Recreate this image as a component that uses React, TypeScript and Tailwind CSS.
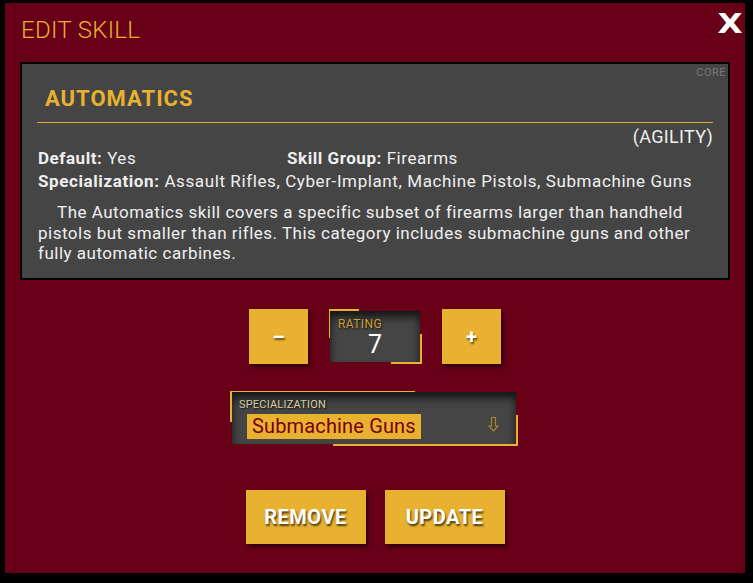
import React from "react";

// Edit skill modal — dark red panel over a black page

const SpinButton: React.FC<{ label: string }> = ({ label }) => (
  <button className="w-[59px] h-[55px] bg-[#e8b230] shadow-[2px_3px_4px_rgba(0,0,0,0.55)] flex items-center justify-center text-white font-bold text-[20px] [text-shadow:1px_2px_2px_rgba(0,0,0,0.6)]">
    {label}
  </button>
);

const ActionButton: React.FC<{ label: string }> = ({ label }) => (
  <button className="w-[120px] h-[54px] bg-[#e8b230] shadow-[2px_3px_4px_rgba(0,0,0,0.55)] flex items-center justify-center text-white font-bold text-[20px] tracking-[0.5px] [text-shadow:1px_2px_2px_rgba(0,0,0,0.7)]">
    {label}
  </button>
);

// outlined down arrow used by the select
const DownArrow = () => (
  <svg width="11" height="15" viewBox="0 0 11 15" fill="none" stroke="#a8842c" strokeWidth="1.2">
    <path d="M3.5 0.5 H7.5 V9 H10 L5.5 14 L1 9 H3.5 Z" />
  </svg>
);

export default function App() {
  return (
    <div className="w-[753px] h-[583px] bg-black pl-[5px] pt-[3px] font-['Roboto',sans-serif] overflow-hidden">
      <div className="relative w-[740px] h-[570px] bg-[#680018] flex flex-col">
        {/* header */}
        <div className="flex items-start justify-between pl-[16px] pr-[5px] pt-[13px] h-[59px]">
          <h2 className="text-[24px] leading-[28px] text-[#e8b230] font-light tracking-[0.3px]">EDIT SKILL</h2>
          <button className="inline-block scale-x-[1.25] text-white font-bold text-[26px] leading-[26px] mt-[-5px] font-['DejaVu_Sans',sans-serif]">X</button>
        </div>

        {/* skill card */}
        <div className="ml-[15px] w-[710px] h-[218px] border-2 border-black bg-[#454545] px-[15px] pt-[22px] text-[#efefef]">
          <div className="relative">
            <span className="absolute right-[-13px] top-[-21px] text-[11px] text-[#7a7a7a] tracking-[0.5px]">CORE</span>
            <h3 className="pl-[8px] text-[22px] leading-[26px] font-bold text-[#e8b230] tracking-[1px]">AUTOMATICS</h3>
          </div>
          <div className="mt-[10px] border-t border-[#d9a93a]" />
          <div className="text-right text-[18px] leading-[20px] mt-[4px] tracking-[0.3px]">(AGILITY)</div>
          <div className="flex text-[17px] leading-[23px] pl-[1px] tracking-[0.55px]">
            <div className="w-[249px]"><span className="font-bold">Default:</span> Yes</div>
            <div><span className="font-bold">Skill Group:</span> Firearms</div>
          </div>
          <div className="text-[17px] leading-[23px] pl-[1px] tracking-[0.6px]">
            <span className="font-bold">Specialization:</span> Assault Rifles, Cyber-Implant, Machine Pistols, Submachine Guns
          </div>
          <p className="mt-[9px] text-[17px] leading-[20.5px] pl-[1px] indent-[19px] tracking-[0.5px]">
            The Automatics skill covers a specific subset of firearms larger than handheld
            <br />
            pistols but smaller than rifles. This category includes submachine guns and other
            <br />
            fully automatic carbines.
          </p>
        </div>

        {/* rating */}
        <div className="mt-[29px] flex items-center justify-center">
          <SpinButton label="–" />
          <div className="relative w-[93px] h-[55px] ml-[21px] mr-[20px]">
            <div className="absolute left-0 top-0 w-[30px] h-[29px] border-l-2 border-t-2 border-[#e8b230]" />
            <div className="absolute right-0 bottom-0 w-[31px] h-[30px] border-r-2 border-b-2 border-[#e8b230]" />
            <div className="absolute left-[1px] top-[2px] w-[90px] h-[51px] bg-[#454545] shadow-[inset_0_6px_9px_rgba(0,0,0,0.7)] flex flex-col pl-[8px] pt-[7px]">
              <span className="text-[12px] leading-[12px] text-[#caa033] tracking-[0.4px] [text-shadow:1px_1px_2px_rgba(0,0,0,0.9)]">RATING</span>
              <span className="text-white text-[25px] leading-[18px] text-center pr-[8px] mt-[6px]">7</span>
            </div>
          </div>
          <SpinButton label="+" />
        </div>

        {/* specialization select */}
        <div className="mt-[27px] flex justify-center">
          <div className="relative w-[288px] h-[55px] ml-[-2px]">
            <div className="absolute left-0 top-0 w-[185px] h-[31px] border-l-2 border-t-2 border-[#e8b230]" />
            <div className="absolute right-0 bottom-0 w-[185px] h-[31px] border-r-2 border-b-2 border-[#e8b230]" />
            <div className="absolute left-[2px] top-[1px] w-[284px] h-[52px] bg-[#454545] shadow-[inset_0_6px_9px_rgba(0,0,0,0.7)] pl-[7px] pt-[7px]">
              <div className="text-[11px] leading-[12px] text-[#d8cfa6] tracking-[0.2px] [text-shadow:1px_1px_2px_rgba(0,0,0,0.9)]">SPECIALIZATION</div>
              <div className="mt-[3px] flex items-center justify-between pr-[17px]">
                <span className="ml-[8px] bg-[#e8b230] px-[5px] text-[20px] leading-[25px] text-[#780012] tracking-[0.15px]">Submachine Guns</span>
                <span className="mt-[-4px]"><DownArrow /></span>
              </div>
            </div>
          </div>
        </div>

        {/* actions */}
        <div className="mt-[44px] flex justify-center gap-[19px]">
          <ActionButton label="REMOVE" />
          <ActionButton label="UPDATE" />
        </div>
      </div>
    </div>
  );
}
